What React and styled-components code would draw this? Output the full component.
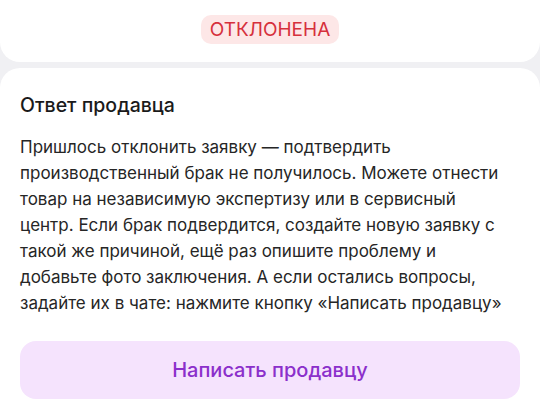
import React from "react";
import styled, { createGlobalStyle } from "styled-components";

const GlobalStyle = createGlobalStyle`
  html, body {
    margin: 0;
    padding: 0;
    background: #f0f0f3;
    font-family: Inter, "Noto Sans", sans-serif;
    -webkit-font-smoothing: antialiased;
  }
`;

const Page = styled.div`
  display: flex;
  flex-direction: column;
  gap: 6px;
  width: 540px;
  height: 405px;
  overflow: hidden;
`;

const StatusCard = styled.div`
  background: #fff;
  border-radius: 0 0 20px 20px;
  padding: 15px 0 18px;
  display: flex;
  justify-content: center;
`;

const Badge = styled.span`
  background: #fde7e7;
  color: #d6303c;
  font-size: 19px;
  line-height: 21px;
  font-weight: 400;
  padding: 4px 9px;
  border-radius: 10px;
  text-transform: uppercase;
`;

const Card = styled.div`
  background: #fff;
  border-radius: 20px 20px 0 0;
  padding: 25px 20px 0;
  flex: 1;
`;

const Title = styled.h2`
  margin: 0;
  font-size: 19.5px;
  line-height: 24px;
  font-weight: 500;
  color: #1a1a1a;
`;

const Text = styled.p`
  margin: 17px 10px 0 0;
  font-size: 17px;
  line-height: 26px;
  color: #262626;
`;

const Button = styled.button`
  display: block;
  width: 100%;
  height: 58px;
  margin-top: 25px;
  border: 0;
  border-radius: 16px;
  background: #f5e3fd;
  color: #8b2fcb;
  font-family: inherit;
  font-size: 20px;
  font-weight: 500;
`;

export default function App() {
  return (
    <>
      <GlobalStyle />
      <Page>
        <StatusCard>
          <Badge>Отклонена</Badge>
        </StatusCard>
        <Card>
          <Title>Ответ продавца</Title>
          <Text>
            Пришлось отклонить заявку — подтвердить производственный брак не
            получилось. Можете отнести товар на независимую экспертизу или в
            сервисный центр. Если брак подвердится, создайте новую заявку с
            такой же причиной, ещё раз опишите проблему и добавьте фото
            заключения. А если остались вопросы, задайте их в чате: нажмите
            кнопку «Написать продавцу»
          </Text>
          <Button>Написать продавцу</Button>
        </Card>
      </Page>
    </>
  );
}
